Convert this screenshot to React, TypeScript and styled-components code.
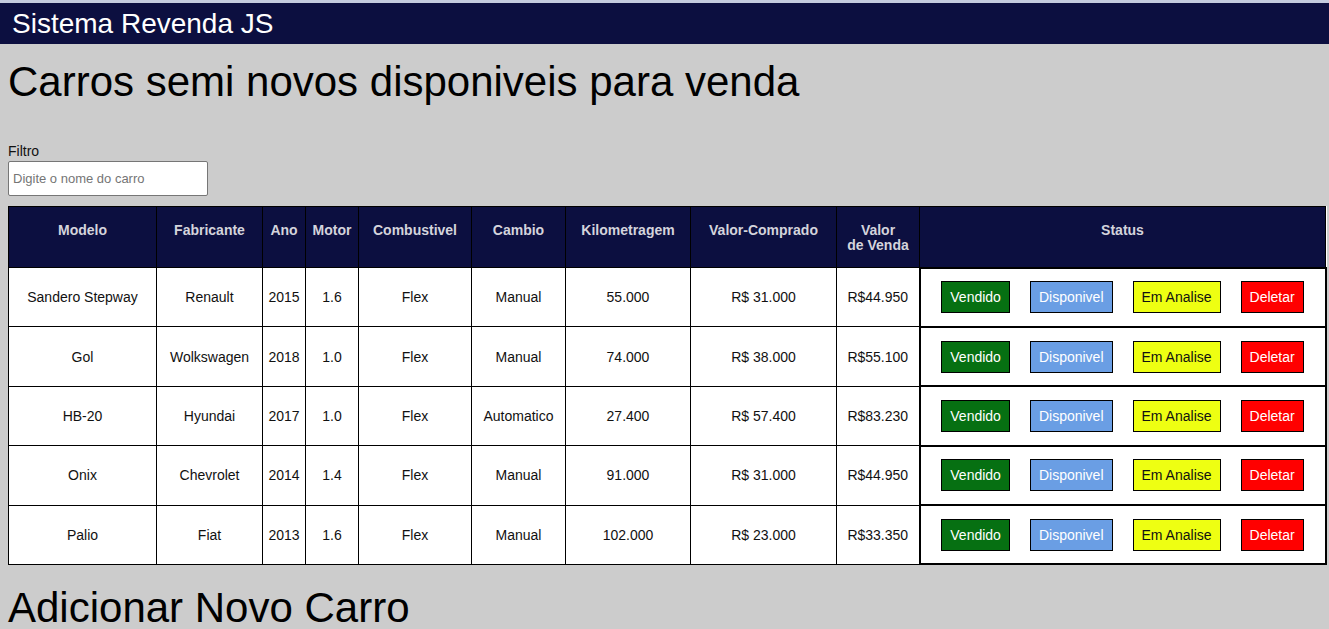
import styled, {createGlobalStyle} from "styled-components";

const GlobalStyle = createGlobalStyle`
  body {
    margin: 0;
    background: #cccccc;
    font-family: "Liberation Sans", Arial, sans-serif;
  }
`;

const TopBar = styled.header`
  border-top: 3px solid #c4cbde;
  background: #0c0f40;
  height: 41px;
  display: flex;
  align-items: center;
  padding-left: 12px;
`;

const BrandTitle = styled.h2`
  margin: 0;
  color: #ffffff;
  font-size: 28px;
  font-weight: normal;
`;

const Main = styled.main`
  padding: 0 4px 0 8px;
`;

const PageTitle = styled.h1`
  margin: 10px 0 0;
  font-size: 42px;
  font-weight: normal;
  color: #000;
  line-height: 56px;
`;

const FilterBox = styled.div`
  display: flex;
  flex-direction: column;
  margin-top: 33px;
  gap: 2px;
`;

const FilterLabel = styled.label`
  font-size: 14px;
  color: #111;
`;

const FilterInput = styled.input`
  box-sizing: border-box;
  width: 200px;
  height: 35px;
  padding: 0 4px;
  border: 1px solid #767676;
  border-radius: 2px;
  font-family: "Liberation Sans", Arial, sans-serif;
  font-size: 13px;
  background: #fff;

  &::placeholder {
    color: #757575;
  }
`;

const CarTable = styled.table`
  margin-top: 10px;
  width: 1317px;
  border-collapse: collapse;
  table-layout: fixed;
  background: #fff;
  border: 1px solid #000;
`;

const HeadCell = styled.th`
  background: #0c0f40;
  color: #d4d4dc;
  font-size: 14px;
  font-weight: bold;
  border: 1px solid #000;
  height: 61px;
  box-sizing: border-box;
  vertical-align: top;
  padding: 16px 4px 0;
  line-height: 15px;
`;

const Cell = styled.td`
  border: 1px solid #000;
  text-align: center;
  font-size: 14px;
  color: #111;
  height: 57.4px;
  padding: 0 4px;
`;

const StatusCell = styled.td`
  border: 2px solid #000;
  height: 57.4px;
  padding: 0;
`;

const StatusActions = styled.div`
  display: flex;
  justify-content: center;
  gap: 20px;
`;

const StatusButton = styled.button<{$bg: string; $fg: string}>`
  height: 32px;
  padding: 0 8px;
  border: 1px solid #000;
  background: ${({$bg}) => $bg};
  color: ${({$fg}) => $fg};
  font-family: "Liberation Sans", Arial, sans-serif;
  font-size: 14px;
  cursor: pointer;
`;

const SectionTitle = styled.h1`
  margin: 18px 0 0;
  font-size: 42px;
  font-weight: normal;
  line-height: 50px;
`;

const columns = [
  {label: "Modelo", width: 148},
  {label: "Fabricante", width: 106},
  {label: "Ano", width: 43},
  {label: "Motor", width: 53},
  {label: "Combustivel", width: 113},
  {label: "Cambio", width: 94},
  {label: "Kilometragem", width: 125},
  {label: "Valor-Comprado", width: 146},
  {label: "Valor\nde Venda", width: 83},
  {label: "Status", width: 406},
];

const cars = [
  ["Sandero Stepway", "Renault", "2015", "1.6", "Flex", "Manual", "55.000", "R$ 31.000", "R$44.950"],
  ["Gol", "Wolkswagen", "2018", "1.0", "Flex", "Manual", "74.000", "R$ 38.000", "R$55.100"],
  ["HB-20", "Hyundai", "2017", "1.0", "Flex", "Automatico", "27.400", "R$ 57.400", "R$83.230"],
  ["Onix", "Chevrolet", "2014", "1.4", "Flex", "Manual", "91.000", "R$ 31.000", "R$44.950"],
  ["Palio", "Fiat", "2013", "1.6", "Flex", "Manual", "102.000", "R$ 23.000", "R$33.350"],
];

const actions = [
  {label: "Vendido", bg: "#067012", fg: "#fff"},
  {label: "Disponivel", bg: "#6a9ee4", fg: "#fff"},
  {label: "Em Analise", bg: "#eeff12", fg: "#111"},
  {label: "Deletar", bg: "#ff0000", fg: "#fff"},
];

export default function App() {
  return (
    <>
      <GlobalStyle />
      <TopBar>
        <BrandTitle>Sistema Revenda JS</BrandTitle>
      </TopBar>
      <Main>
        <PageTitle>Carros semi novos disponiveis para venda</PageTitle>
        <FilterBox>
          <FilterLabel htmlFor="filtro">Filtro</FilterLabel>
          <FilterInput id="filtro" placeholder="Digite o nome do carro" />
        </FilterBox>
        <CarTable>
          <colgroup>
            {columns.map((c) => (
              <col key={c.label} style={{width: c.width}} />
            ))}
          </colgroup>
          <thead>
            <tr>
              {columns.map((c) => (
                <HeadCell key={c.label}>
                  {c.label.split("\n").map((line, i) => (
                    <div key={i}>{line}</div>
                  ))}
                </HeadCell>
              ))}
            </tr>
          </thead>
          <tbody>
            {cars.map((car) => (
              <tr key={car[0]}>
                {car.map((value, i) => (
                  <Cell key={i}>{value}</Cell>
                ))}
                <StatusCell>
                  <StatusActions>
                    {actions.map((a) => (
                      <StatusButton key={a.label} $bg={a.bg} $fg={a.fg}>
                        {a.label}
                      </StatusButton>
                    ))}
                  </StatusActions>
                </StatusCell>
              </tr>
            ))}
          </tbody>
        </CarTable>
        <SectionTitle>Adicionar Novo Carro</SectionTitle>
      </Main>
    </>
  );
}
